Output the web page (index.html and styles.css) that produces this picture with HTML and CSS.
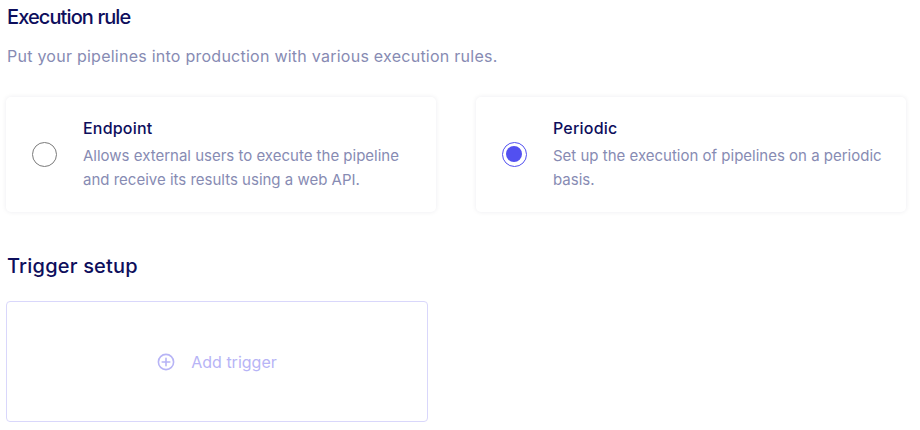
FILE: index.html
```html
<!DOCTYPE html>
<html>
<head>
<meta charset="utf-8">
<link rel="stylesheet" href="styles.css">
</head>
<body>
<div class="page">
  <h2 class="heading heading-main">Execution rule</h2>
  <p class="subtitle">Put your pipelines into production with various execution rules.</p>
  <div class="cards">
    <div class="card">
      <span class="radio"></span>
      <div class="card-text">
        <div class="card-title">Endpoint</div>
        <div class="card-desc">Allows external users to execute the pipeline and receive its results using a web API.</div>
      </div>
    </div>
    <div class="card">
      <span class="radio checked"></span>
      <div class="card-text">
        <div class="card-title">Periodic</div>
        <div class="card-desc">Set up the execution of pipelines on a periodic basis.</div>
      </div>
    </div>
  </div>
  <h2 class="heading heading-trigger">Trigger setup</h2>
  <div class="trigger-box">
    <svg class="add-icon" width="18" height="18" viewBox="0 0 18 18">
      <circle cx="9" cy="9" r="7.6" fill="none" stroke="currentColor" stroke-width="1.6"/>
      <path d="M9 5.2v7.6M5.2 9h7.6" stroke="currentColor" stroke-width="1.6" stroke-linecap="round"/>
    </svg>
    <span class="add-label">Add trigger</span>
  </div>
</div>
</body>
</html>
```
FILE: styles.css
```css
html, body {
  margin: 0;
  padding: 0;
  background: #ffffff;
}
body {
  font-family: Inter, "Noto Sans", sans-serif;
}
.page {
  padding: 2px 0 0 6px;
  width: 900px;
}
.heading {
  margin: 0;
  padding-left: 1px;
  font-size: 20px;
  font-weight: 500;
  line-height: 30px;
  color: #0d0e5c;
}
.heading-main {
  letter-spacing: -0.9px;
}
.subtitle {
  margin: 12px 0 0 0;
  padding-left: 1px;
  font-size: 16px;
  line-height: 24px;
  letter-spacing: 0.25px;
  color: #878bb3;
}
.cards {
  display: grid;
  grid-template-columns: 430px 430px;
  column-gap: 40px;
  margin-top: 29px;
}
.card {
  display: flex;
  align-items: center;
  height: 115px;
  box-sizing: border-box;
  padding: 0 20px 0 26px;
  border-radius: 5px;
  background: #fff;
  box-shadow: 0 0 5px rgba(20, 20, 60, 0.08);
}
.radio {
  flex: none;
  width: 25px;
  height: 25px;
  box-sizing: border-box;
  border-radius: 50%;
  border: 1.5px solid #7a7a7a;
  margin-right: 26px;
  position: relative;
}
.radio.checked {
  border-color: #5250f0;
}
.radio.checked::after {
  content: "";
  position: absolute;
  left: 3px;
  top: 3px;
  width: 16px;
  height: 16px;
  border-radius: 50%;
  background: #5250f0;
}
.card-text {
  margin-top: -2px;
}
.card-title {
  font-size: 16px;
  font-weight: 500;
  line-height: 24px;
  letter-spacing: 0.2px;
  color: #0d0e5c;
}
.card-desc {
  margin-top: 4px;
  font-size: 15px;
  line-height: 24px;
  color: #878bb3;
}
.heading-trigger {
  margin-top: 39px;
  letter-spacing: 0.2px;
}
.trigger-box {
  margin-top: 20px;
  width: 422px;
  height: 121px;
  box-sizing: border-box;
  border: 1px solid #d9d7fb;
  border-radius: 4px;
  display: flex;
  align-items: center;
  justify-content: center;
  gap: 16px;
  color: #b7b4f6;
}
.add-icon {
  display: block;
}
.add-label {
  font-size: 16px;
  line-height: 24px;
}
```
